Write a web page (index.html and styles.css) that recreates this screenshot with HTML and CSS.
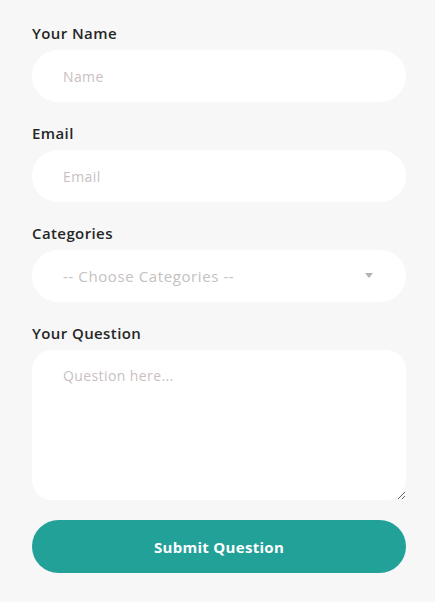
FILE: index.html
```html
<!DOCTYPE html>
<html lang="en">
<head>
<meta charset="utf-8">
<title>Ask a Question</title>
<link rel="stylesheet" href="styles.css">
</head>
<body>
<form class="qform">
  <div class="field">
    <label class="label" for="name">Your Name</label>
    <input class="control" id="name" type="text" placeholder="Name">
  </div>
  <div class="field">
    <label class="label" for="email">Email</label>
    <input class="control" id="email" type="email" placeholder="Email">
  </div>
  <div class="field">
    <label class="label" for="cat">Categories</label>
    <div class="select-wrap">
      <select class="control select" id="cat">
        <option>-- Choose Categories --</option>
      </select>
      <svg class="caret" width="8" height="5" viewBox="0 0 8 5"><path d="M0 0h8L4 5z" fill="#b3b3b3"/></svg>
    </div>
  </div>
  <div class="field">
    <label class="label" for="q">Your Question</label>
    <textarea class="control area" id="q" placeholder="Question here..."></textarea>
  </div>
  <button class="submit" type="button">Submit Question</button>
</form>
</body>
</html>
```
FILE: styles.css
```css
html, body {
  margin: 0;
  padding: 0;
  background: #f7f7f7;
}
body {
  font-family: "Open Sans", "Liberation Sans", sans-serif;
}
.qform {
  width: 374px;
  padding: 23px 0 0 32px;
  display: flex;
  flex-direction: column;
  gap: 21px;
}
.field {
  display: flex;
  flex-direction: column;
  gap: 7px;
}
.label {
  font-size: 15px;
  line-height: 20px;
  font-weight: 600;
  color: #262626;
  letter-spacing: 0.4px;
}
.control {
  box-sizing: border-box;
  width: 374px;
  height: 52px;
  border: none;
  outline: none;
  border-radius: 26px;
  background: #fff;
  padding: 0 31px;
  font-family: inherit;
  font-size: 14px;
  color: #333;
  letter-spacing: 0.4px;
}
.control::placeholder {
  color: #c9bfbf;
}
.select-wrap {
  position: relative;
}
.select {
  appearance: none;
  -webkit-appearance: none;
  font-size: 15px;
  color: #c4c1c1;
  letter-spacing: 0.6px;
}
.caret {
  position: absolute;
  right: 33px;
  top: 23px;
}
.area {
  height: 150px;
  border-radius: 20px;
  padding: 16px 31px;
  resize: vertical;
  line-height: 20px;
}
.submit {
  margin-top: -1px;
  width: 374px;
  height: 53px;
  border: none;
  border-radius: 27px;
  background: #22a199;
  color: #fff;
  font-family: inherit;
  font-size: 15px;
  font-weight: 700;
  letter-spacing: 0.3px;
  cursor: pointer;
}
```
